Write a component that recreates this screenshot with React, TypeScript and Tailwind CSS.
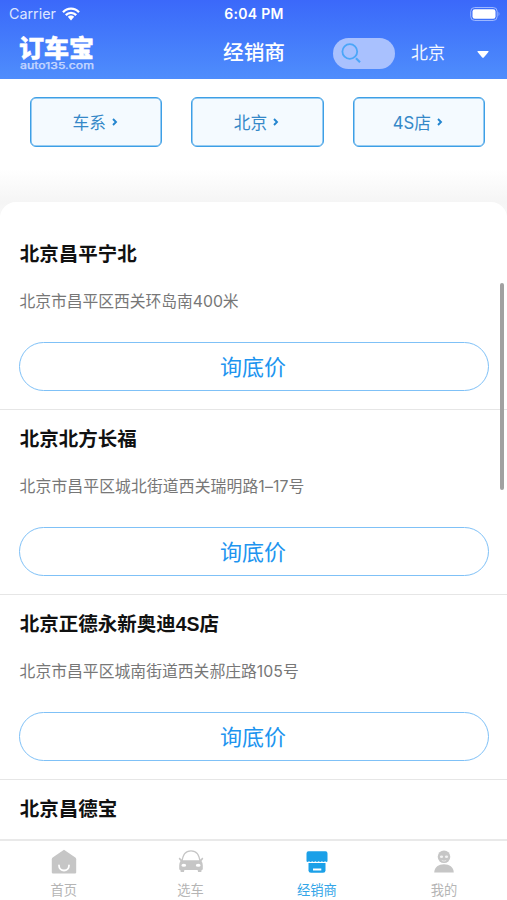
import React from "react";

const dealers = [
  { name: "北京昌平宁北", address: "北京市昌平区西关环岛南400米", tracking: "tracking-[-0.050px]" },
  { name: "北京北方长福", address: "北京市昌平区城北街道西关瑞明路1–17号", tracking: "tracking-[0.120px]" },
  { name: "北京正德永新奥迪4S店", address: "北京市昌平区城南街道西关郝庄路105号", tracking: "tracking-[0.020px]" },
  { name: "北京昌德宝", address: "", tracking: "" },
];

function WifiIcon() {
  return (
    <svg width="18" height="14" viewBox="0 0 18 14" fill="none" stroke="white" strokeWidth="2.3">
      <path d="M1 5.2C5.4.4 12.6.4 17 5.2" />
      <path d="M3.8 8.1c2.9-3.1 7.5-3.1 10.4 0" />
      <path d="M5.8 9.8c1.8-1.9 4.6-1.9 6.4 0L9 13.4Z" fill="white" stroke="none" />
    </svg>
  );
}

function Logo() {
  return (
    <svg width="78" height="42" viewBox="0 0 78 42" className="overflow-visible">
      <text x="1" y="24.700" fontSize="24" fontWeight="900" fill="white" stroke="white" strokeWidth="0.500" strokeLinejoin="round" textLength="75" lengthAdjust="spacingAndGlyphs" style={{ fontFamily: "'Noto Sans CJK SC', sans-serif" }}>订车宝</text>
      <text x="2" y="37.400" fontSize="9.500" fontWeight="500" fill="#c3d5ff" stroke="#c3d5ff" strokeWidth="0.250" textLength="74" lengthAdjust="spacingAndGlyphs" style={{ fontFamily: "Inter, sans-serif" }}>auto135.com</text>
    </svg>
  );
}

function Chevron() {
  return (
    <svg width="6" height="8" viewBox="0 0 6 8" fill="none" stroke="#2385cf" strokeWidth="1.9">
      <path d="M1 1l3 3-3 3" />
    </svg>
  );
}

function HomeIcon() {
  return (
    <svg width="26" height="26" viewBox="0 0 26 26">
      <path d="M13 .8 24.300 8.500Q25.200 9.200 25.200 10.200V23.500Q25.200 24.500 24 24.500H2Q.8 24.500.8 23.500V10.200Q.8 9.200 1.700 8.500Z" fill="#c6c6c6" />
      <path d="M8 16.500a5 5 0 0 0 10 0" fill="none" stroke="white" strokeWidth="1.8" strokeLinecap="round" />
    </svg>
  );
}

function CarIcon() {
  return (
    <svg width="26" height="26" viewBox="0 0 26 26">
      <path d="M3.800 13C5 5.500 7.200 1.800 13 1.800s8 3.700 9.200 11.200" fill="none" stroke="#c6c6c6" strokeWidth="1.300" />
      <path d="M1.500 8.500 4.500 11.200h17l3-2.700.8 1.300-1.800 2.200q1.300 1.800 1.300 4.500v3.500q0 1-1.300 1.200L23.300 23h-3.200l-.5-2H6.400l-.5 2H2.700l-.2-1.800Q1.200 21 1.200 20v-3.500q0-2.700 1.300-4.500L.7 9.800Z" fill="#c6c6c6" />
      <ellipse cx="5.800" cy="16.300" rx="2.400" ry="1.500" fill="white" />
      <ellipse cx="20.200" cy="16.300" rx="2.400" ry="1.500" fill="white" />
    </svg>
  );
}

function StoreIcon() {
  return (
    <svg width="26" height="26" viewBox="0 0 26 26" fill="#1ba0e8">
      <path d="M4.500 2.200h17Q23.500 2.200 23.500 4.500v7.700q-.8 1.600-2.400 0-1.600 1.600-3.200 0-1.600 1.600-3.300 0-1.600 1.600-3.200 0-1.600 1.600-3.200 0-1.600 1.600-3.200 0-1.600 1.600-2.500 0V4.500Q2.500 2.200 4.500 2.200Z" />
      <path d="M4.500 14h17V21.500q0 2.300-2.500 2.300H7Q4.500 23.800 4.500 21.500Z" />
      <path d="M9 19.500h8.300v2H9Z" fill="white" />
    </svg>
  );
}

function PersonIcon() {
  return (
    <svg width="26" height="26" viewBox="0 0 26 26" fill="#c6c6c6">
      <circle cx="13" cy="7.800" r="6.300" />
      <path d="M3.200 23.500c.4-5.500 4.300-8.200 9.800-8.200s9.400 2.700 9.800 8.200Z" />
      <ellipse cx="10.500" cy="7.700" rx="1.600" ry="1.300" fill="#f2f2f2" />
      <ellipse cx="15.500" cy="7.700" rx="1.600" ry="1.300" fill="#f2f2f2" />
      <path d="M10.800 11.500q2.200 1.300 4.400 0" fill="none" stroke="#eee" strokeWidth=".8" />
    </svg>
  );
}

const tabs = [
  { label: "首页", icon: <HomeIcon />, active: false },
  { label: "选车", icon: <CarIcon />, active: false },
  { label: "经销商", icon: <StoreIcon />, active: true },
  { label: "我的", icon: <PersonIcon />, active: false },
];

export default function App() {
  return (
    <div className="relative flex h-[900px] w-[507px] flex-col overflow-hidden bg-white font-['Inter','Noto_Sans_CJK_SC',sans-serif]">
      <header className="h-[79px] shrink-0 bg-gradient-to-b from-[#3b68fa] to-[#4f8dfc] text-white">
        <div className="grid h-[27px] grid-cols-3 items-center pr-[6px] pl-[9px]">
          <div className="flex items-center gap-[6px] text-[14.300px] text-[#dce5ff]">
            <span>Carrier</span>
            <WifiIcon />
          </div>
          <div className="pr-[2px] text-center text-[14px] font-semibold tracking-[0.300px]">6:04 PM</div>
          <div className="flex items-center justify-end">
            <svg width="31" height="14" viewBox="0 0 31 14">
              <rect x=".7" y=".5" width="26.500" height="13" rx="4" fill="none" stroke="#9db7ff" />
              <rect x="2.500" y="2.200" width="23" height="9.600" rx="2.300" fill="white" />
              <path d="M28.500 4.800q2 2.200 0 4.400Z" fill="#8caaff" />
            </svg>
          </div>
        </div>
        <div className="flex h-[52px] items-center">
          <div className="w-[205px] pl-[18px]"><Logo /></div>
          <h1 className="w-[98px] text-center text-[20.700px] leading-[30px] font-medium">经销商</h1>
          <div className="ml-[30px] flex h-[31px] w-[62px] items-center rounded-full bg-[#a9c1fe] pl-[8px]">
            <svg width="22" height="22" viewBox="0 0 22 22" fill="none" stroke="#4ba6f8" strokeWidth="1.800">
              <circle cx="8.800" cy="9.500" r="7.400" />
              <path d="m15 16.300 4 4" strokeWidth="2.200" />
            </svg>
          </div>
          <span className="mt-[2px] ml-[16px] text-[17px] text-[#f0f5ff]">北京</span>
          <svg className="mt-[3px] ml-[32px]" width="12" height="7" viewBox="0 0 12 7" fill="white">
            <path d="M1 0h10q1 .2.400 1L6.800 6.500q-.8.700-1.600 0L.6 1Q0 .2 1 0Z" />
          </svg>
        </div>
      </header>

      <section className="h-[145px] shrink-0 bg-[linear-gradient(to_bottom,#fff_90px,#f5f5f5_123px,#fafafa_145px)]">
        <div className="flex gap-[29px] pt-[18px] pl-[30px]">
          {["车系", "北京", "4S店"].map((label) => (
            <button key={label} className="flex h-[49.500px] w-[132.300px] shrink-0 items-center justify-center gap-[6px] rounded-[6px] border-[1.500px] border-[#3d9fe6] bg-[#f4faff] pt-[3px] pr-[2px] text-[16.700px] text-[#3588c8] shadow-[inset_0_0_0_0.500px_#3d9fe6]">
              <span>{label}</span>
              <span className="-mt-[3px]"><Chevron /></span>
            </button>
          ))}
        </div>
      </section>

      <main className="-mt-[22px] flex-1 overflow-hidden rounded-t-[16px] bg-white pt-[23px]">
        {dealers.map((dealer) => (
          <article key={dealer.name} className="h-[185px] border-b border-[#e6e6e6] pr-[18px] pl-[19px] pt-[14px]">
            <h2 className="pl-[0.700px] font-['Liberation_Sans','Noto_Sans_CJK_SC',sans-serif] text-[19.500px] leading-[30px] font-bold text-[#111]">{dealer.name}</h2>
            {dealer.address && (
              <>
                <p className={`mt-[21px] pl-[0.600px] text-[15.800px] leading-[24px] text-[#777] ${dealer.tracking}`}>{dealer.address}</p>
                <button className="mt-[28px] flex h-[49px] w-full items-center justify-center rounded-full border border-[#7fc1f7] pt-px pr-[2px] text-[22px] text-[#2094ef]">
                  询底价
                </button>
              </>
            )}
          </article>
        ))}
      </main>

      <nav className="grid h-[61px] shrink-0 grid-cols-4 border-t-2 border-[#e9e9e9] bg-white">
        {tabs.map((tab) => (
          <div key={tab.label} className={tab.active ? "flex flex-col items-center pt-[8px] text-[#32a5e8]" : "flex flex-col items-center pt-[8px] pl-px text-[#b5b5b5]"}>
            {tab.icon}
            <span className="mt-[5px] text-[13.300px] leading-[20px]">{tab.label}</span>
          </div>
        ))}
      </nav>

      <div className="absolute top-[283px] right-[3px] h-[207px] w-[4px] rounded-full bg-[#a1a1a1]" />
    </div>
  );
}
